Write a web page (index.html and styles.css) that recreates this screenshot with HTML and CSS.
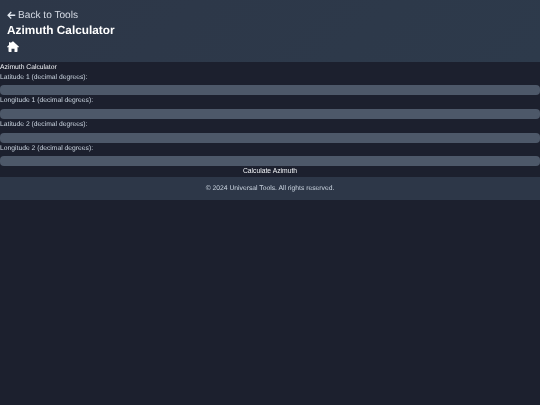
FILE: index.html
```html
<!DOCTYPE html>
<html lang="en">
<head>
<meta charset="utf-8">
<title>Azimuth Calculator</title>
<link rel="stylesheet" href="styles.css">
</head>
<body>
<header class="site-header">
  <a class="back-link" href="#"><svg class="back-icon" viewBox="0 0 16 14" aria-hidden="true"><path d="M8 1 2 7l6 6M2.500 7H15.500"/></svg><span>Back to Tools</span></a>
  <h1 class="page-title">Azimuth Calculator</h1>
  <a class="home-link" href="#" aria-label="Home"><svg class="home-icon" viewBox="0 0 24 22" aria-hidden="true"><path d="M12 .5 24 11.500l-1.400 1.700L21 12v8.500a1.500 1.500 0 0 1-1.500 1.500H15v-6.500H9V22H4.500A1.500 1.500 0 0 1 3 20.500V12l-1.600 1.200L0 11.500 4 8V2.500h3v1.300z"/></svg></a>
</header>
<main class="calculator">
  <h2 class="calc-title">Azimuth Calculator</h2>
  <label class="field-label" for="lat1">Latitude 1 (decimal degrees):</label>
  <input class="field-input" id="lat1" type="text">
  <label class="field-label" for="lon1">Longitude 1 (decimal degrees):</label>
  <input class="field-input" id="lon1" type="text">
  <label class="field-label" for="lat2">Latitude 2 (decimal degrees):</label>
  <input class="field-input" id="lat2" type="text">
  <label class="field-label" for="lon2">Longitude 2 (decimal degrees):</label>
  <input class="field-input" id="lon2" type="text">
  <button class="calc-button" type="button">Calculate Azimuth</button>
</main>
<footer class="site-footer"><span class="footer-text">© 2024 Universal Tools. All rights reserved.</span></footer>
</body>
</html>
```
FILE: styles.css
```css
html, body {
  margin: 0;
  padding: 0;
}
body {
  height: 405px;
  overflow: hidden;
  background: #1c202e;
  color: #e2e8f0;
  font-family: "Liberation Sans", Arial, sans-serif;
  text-rendering: geometricPrecision;
}
.site-header {
  box-sizing: border-box;
  height: 61.500px;
  padding: 9px 7px 0;
  background: linear-gradient(135deg, #2d3748, #2d3a4b);
  display: flex;
  flex-direction: column;
  align-items: flex-start;
}
.back-link {
  display: flex;
  align-items: center;
  gap: 2.500px;
  height: 13px;
  color: #d5dbe5;
  font-size: 10.130px;
  text-decoration: none;
  will-change: opacity;
}
.back-icon {
  width: 8.500px;
  height: 8.500px;
  fill: none;
  stroke: #e2e8f0;
  stroke-width: 2.400;
}
.page-title {
  margin: 1px 0 0;
  color: #fff;
  font-size: 11.800px;
  line-height: 15px;
  font-weight: 700;
  will-change: opacity;
}
.home-link {
  display: block;
  margin-top: 3px;
}
.home-icon {
  display: block;
  width: 12px;
  height: 11px;
  fill: #fff;
}
.calculator {
  display: flex;
  flex-direction: column;
  height: 115.500px;
  box-sizing: border-box;
  padding-top: 2px;
  will-change: opacity;
}
.calc-title {
  margin: 0;
  color: #f2f4f7;
  font-size: 6.750px;
  line-height: 8px;
  font-weight: 400;
}
.field-label {
  display: block;
  color: #cbd5e0;
  font-size: 6.750px;
  line-height: 8px;
  margin-top: 2px;
  margin-bottom: 3.700px;
}
.field-input {
  display: block;
  box-sizing: border-box;
  width: 100%;
  height: 10px;
  margin: 0;
  padding: 0;
  border: 0;
  border-radius: 4px;
  background: #4d5869;
}
.calc-button {
  display: block;
  width: 100%;
  height: 10px;
  padding: 0;
  margin: 0;
  border: 0;
  background: transparent;
  color: #f2f4f7;
  font-family: inherit;
  font-size: 6.750px;
  line-height: 10px;
  text-align: center;
}
.site-footer {
  height: 23px;
  background: #2d3748;
  color: #cbd5e0;
  font-size: 6.750px;
  line-height: 23px;
  text-align: center;
}
.footer-text {
  display: block;
  will-change: opacity;
}
```
